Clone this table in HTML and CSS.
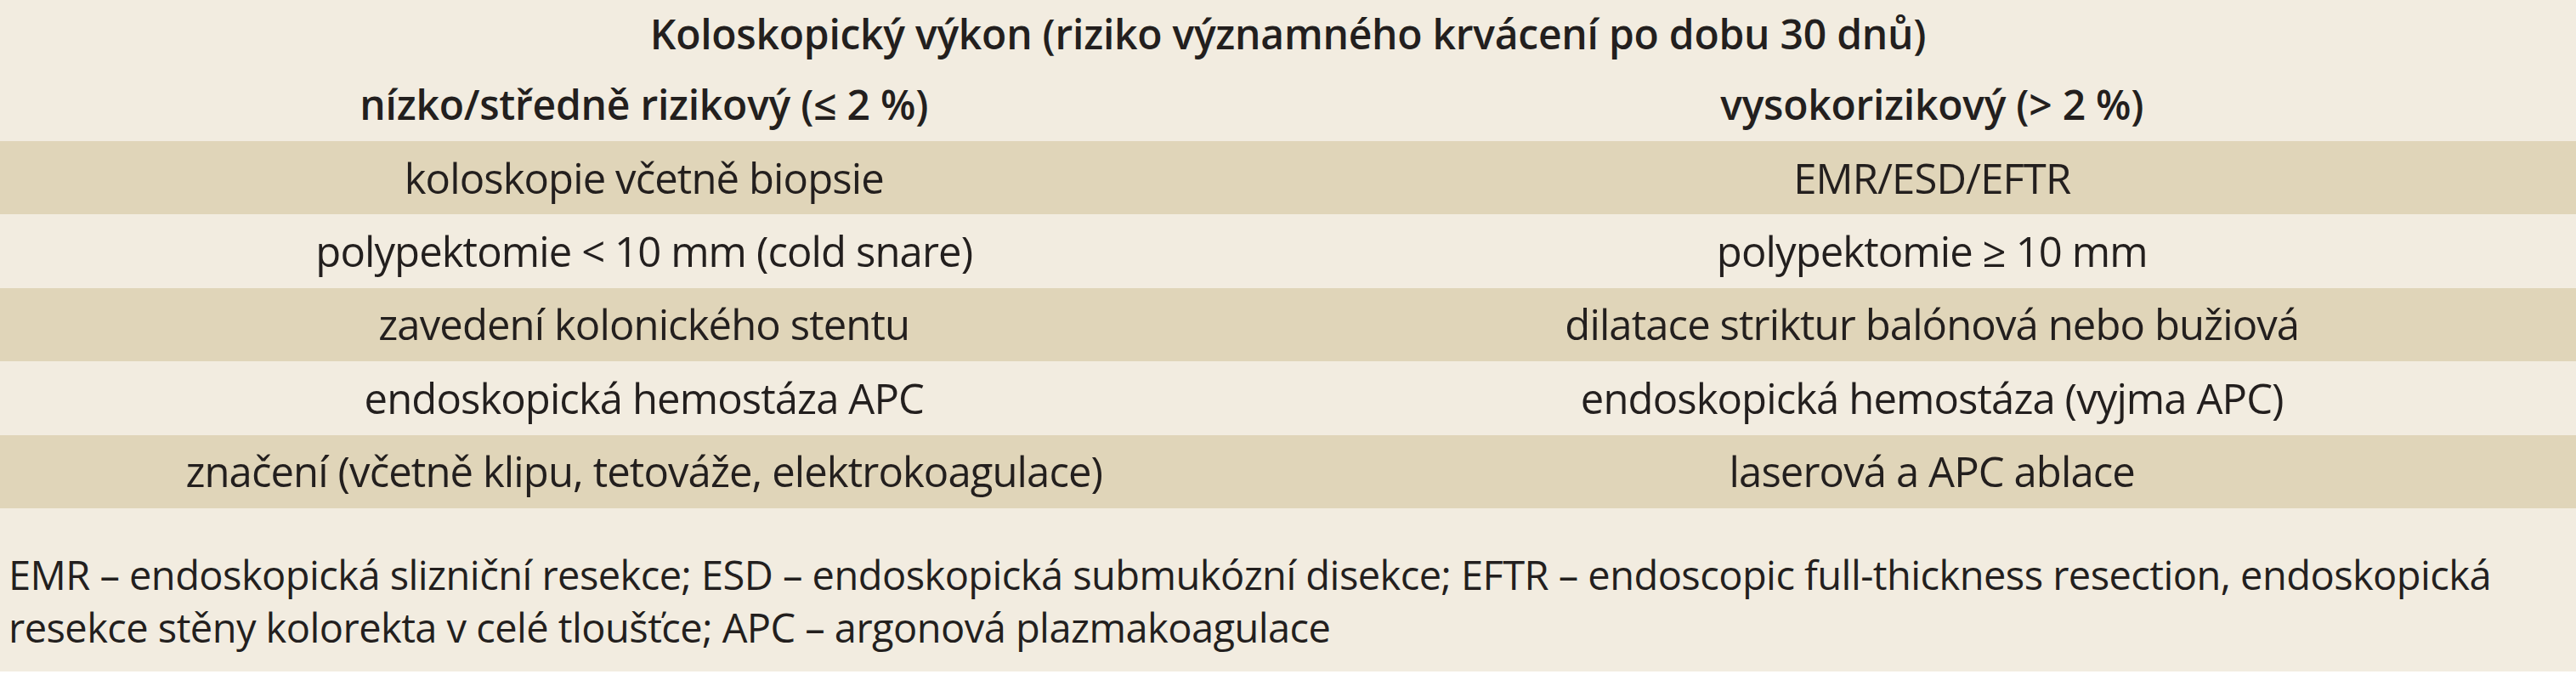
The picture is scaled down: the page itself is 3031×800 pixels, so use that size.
FILE: index.html
```html
<!DOCTYPE html>
<html lang="cs">
<head>
<meta charset="utf-8">
<title>Koloskopický výkon</title>
<link rel="stylesheet" href="styles.css">
</head>
<body>
<div class="sheet">
  <table class="risk">
    <thead>
      <tr class="title-row"><th colspan="2">Koloskopický výkon (riziko významného krvácení po dobu 30 dnů)</th></tr>
      <tr class="head-row"><th>nízko/středně rizikový (≤ 2 %)</th><th>vysokorizikový (&gt; 2 %)</th></tr>
    </thead>
    <tbody>
      <tr class="band"><td>koloskopie včetně biopsie</td><td>EMR/ESD/EFTR</td></tr>
      <tr><td>polypektomie &lt; 10 mm (cold snare)</td><td>polypektomie ≥ 10 mm</td></tr>
      <tr class="band"><td>zavedení kolonického stentu</td><td>dilatace striktur balónová nebo bužiová</td></tr>
      <tr><td>endoskopická hemostáza APC</td><td>endoskopická hemostáza (vyjma APC)</td></tr>
      <tr class="band"><td>značení (včetně klipu, tetováže, elektrokoagulace)</td><td>laserová a APC ablace</td></tr>
    </tbody>
  </table>
  <p class="note">EMR – endoskopická slizniční resekce; ESD – endoskopická submukózní disekce; EFTR – endoscopic full-thickness resection, endoskopická resekce stěny kolorekta v celé tloušťce; APC – argonová plazmakoagulace</p>
</div>
</body>
</html>
```
FILE: styles.css
```css
html, body {
  margin: 0;
  padding: 0;
  background: #ffffff;
}
body {
  font-family: "Open Sans", "Noto Sans", sans-serif;
  color: #231f1e;
}
.sheet {
  width: 3031px;
  height: 790px;
  background: #f2ece0;
  box-sizing: border-box;
}
.risk {
  width: 100%;
  border-collapse: collapse;
  table-layout: fixed;
}
.risk th, .risk td {
  padding: 0;
  text-align: center;
  vertical-align: middle;
  font-size: 49px;
  letter-spacing: -0.9px;
  line-height: 1;
  white-space: nowrap;
}
.risk th {
  font-size: 48px;
  font-weight: 600;
  letter-spacing: -0.25px;
}
.title-row th { height: 80px; }
.head-row th { height: 86px; }
.risk tbody td { height: 86.4px; font-weight: 400; }
.band td { background: #e0d5b9; }
.note {
  margin: 0;
  padding: 47px 20px 0 10px;
  font-size: 47px;
  letter-spacing: -0.55px;
  line-height: 62px;
}
```
